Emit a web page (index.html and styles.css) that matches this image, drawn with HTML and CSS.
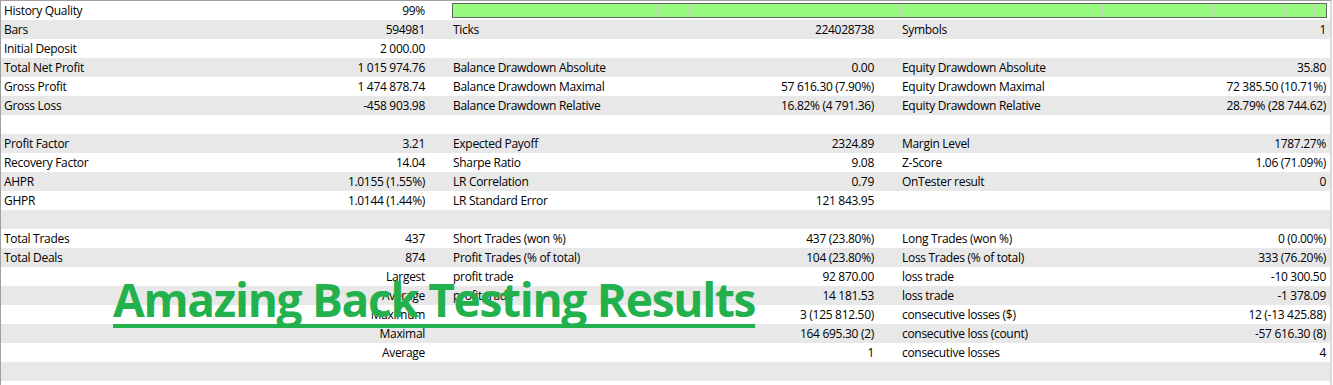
FILE: index.html
```html
<!DOCTYPE html>
<html>
<head>
<meta charset="utf-8">
<link rel="stylesheet" href="styles.css">
</head>
<body>
<div class="report">
  <div class="row">
    <div class="cell"><span>History Quality</span><span>99%</span></div>
    <div class="quality">
      <div class="seg" style="width:4px"></div>
      <div class="seg" style="width:121px"></div>
      <div class="seg" style="width:78px"></div>
      <div class="seg" style="width:31px"></div>
      <div class="seg" style="width:98px"></div>
      <div class="seg" style="width:110px"></div>
      <div class="seg" style="width:100px"></div>
      <div class="seg" style="width:100px"></div>
      <div class="seg" style="width:76px"></div>
      <div class="seg" style="width:32px"></div>
      <div class="seg" style="width:71px"></div>
      <div class="seg" style="width:29px"></div>
      <div class="seg last"></div>
    </div>
  </div>
  <div class="row">
    <div class="cell"><span>Bars</span><span>594981</span></div>
    <div class="cell"><span>Ticks</span><span>224028738</span></div>
    <div class="cell"><span>Symbols</span><span>1</span></div>
  </div>
  <div class="row">
    <div class="cell"><span>Initial Deposit</span><span>2 000.00</span></div>
    <div class="cell"></div>
    <div class="cell"></div>
  </div>
  <div class="row">
    <div class="cell"><span>Total Net Profit</span><span>1 015 974.76</span></div>
    <div class="cell"><span>Balance Drawdown Absolute</span><span>0.00</span></div>
    <div class="cell"><span>Equity Drawdown Absolute</span><span>35.80</span></div>
  </div>
  <div class="row">
    <div class="cell"><span>Gross Profit</span><span>1 474 878.74</span></div>
    <div class="cell"><span>Balance Drawdown Maximal</span><span>57 616.30 (7.90%)</span></div>
    <div class="cell"><span>Equity Drawdown Maximal</span><span>72 385.50 (10.71%)</span></div>
  </div>
  <div class="row">
    <div class="cell"><span>Gross Loss</span><span>-458 903.98</span></div>
    <div class="cell"><span>Balance Drawdown Relative</span><span>16.82% (4 791.36)</span></div>
    <div class="cell"><span>Equity Drawdown Relative</span><span>28.79% (28 744.62)</span></div>
  </div>
  <div class="row"></div>
  <div class="row">
    <div class="cell"><span>Profit Factor</span><span>3.21</span></div>
    <div class="cell"><span>Expected Payoff</span><span>2324.89</span></div>
    <div class="cell"><span>Margin Level</span><span>1787.27%</span></div>
  </div>
  <div class="row">
    <div class="cell"><span>Recovery Factor</span><span>14.04</span></div>
    <div class="cell"><span>Sharpe Ratio</span><span>9.08</span></div>
    <div class="cell"><span>Z-Score</span><span>1.06 (71.09%)</span></div>
  </div>
  <div class="row">
    <div class="cell"><span>AHPR</span><span>1.0155 (1.55%)</span></div>
    <div class="cell"><span>LR Correlation</span><span>0.79</span></div>
    <div class="cell"><span>OnTester result</span><span>0</span></div>
  </div>
  <div class="row">
    <div class="cell"><span>GHPR</span><span>1.0144 (1.44%)</span></div>
    <div class="cell"><span>LR Standard Error</span><span>121 843.95</span></div>
    <div class="cell"></div>
  </div>
  <div class="row"></div>
  <div class="row">
    <div class="cell"><span>Total Trades</span><span>437</span></div>
    <div class="cell"><span>Short Trades (won %)</span><span>437 (23.80%)</span></div>
    <div class="cell"><span>Long Trades (won %)</span><span>0 (0.00%)</span></div>
  </div>
  <div class="row">
    <div class="cell"><span>Total Deals</span><span>874</span></div>
    <div class="cell"><span>Profit Trades (% of total)</span><span>104 (23.80%)</span></div>
    <div class="cell"><span>Loss Trades (% of total)</span><span>333 (76.20%)</span></div>
  </div>
  <div class="row">
    <div class="cell"><span></span><span>Largest</span></div>
    <div class="cell"><span>profit trade</span><span>92 870.00</span></div>
    <div class="cell"><span>loss trade</span><span>-10 300.50</span></div>
  </div>
  <div class="row">
    <div class="cell"><span></span><span>Average</span></div>
    <div class="cell"><span>profit trade</span><span>14 181.53</span></div>
    <div class="cell"><span>loss trade</span><span>-1 378.09</span></div>
  </div>
  <div class="row">
    <div class="cell"><span></span><span>Maximum</span></div>
    <div class="cell"><span></span><span>3 (125 812.50)</span></div>
    <div class="cell"><span>consecutive losses ($)</span><span>12 (-13 425.88)</span></div>
  </div>
  <div class="row">
    <div class="cell"><span></span><span>Maximal</span></div>
    <div class="cell"><span></span><span>164 695.30 (2)</span></div>
    <div class="cell"><span>consecutive loss (count)</span><span>-57 616.30 (8)</span></div>
  </div>
  <div class="row">
    <div class="cell"><span></span><span>Average</span></div>
    <div class="cell"><span></span><span>1</span></div>
    <div class="cell"><span>consecutive losses</span><span>4</span></div>
  </div>
  <div class="row"></div>
  <div class="row"></div>
  <h1 class="title">Amazing Back Testing Results</h1>
</div>
</body>
</html>
```
FILE: styles.css
```css
html, body {
  margin: 0;
  padding: 0;
  background: #ffffff;
}

.report {
  position: relative;
  width: 1329px;
  height: 384px;
  overflow: hidden;
  border-top: 1px solid #a0a0a0;
  border-left: 1px solid #a0a0a0;
  border-right: 2px solid #dadada;
  font-family: "Open Sans", "Noto Sans", sans-serif;
  font-size: 12px;
  letter-spacing: -0.3px;
  color: #000000;
}

.row {
  display: grid;
  grid-template-columns: 449px 449px 431px;
  height: 19px;
  line-height: 19px;
}

.row:nth-child(even) {
  background: #e8e8e8;
}

.cell {
  display: flex;
  justify-content: space-between;
  padding: 0 25px 0 3px;
  white-space: nowrap;
}

.cell:nth-child(3) {
  padding-right: 4px;
}

.quality {
  grid-column: 2 / 4;
  display: flex;
  margin: 2px 3px 2px 2px;
  border: 1px solid #646464;
  background: #98fb80;
}

.seg {
  height: 13px;
  border-right: 1px solid #c4dcbc;
  flex: none;
}

.seg.last {
  flex: 1;
  border-right: none;
}

.title {
  position: absolute;
  left: 112px;
  top: 269px;
  margin: 0;
  font-family: "Open Sans", sans-serif;
  font-weight: 700;
  font-size: 46px;
  line-height: 58px;
  color: #22b14c;
  text-decoration: underline;
  text-decoration-thickness: 4px;
  text-underline-offset: 7px;
  text-decoration-skip-ink: none;
  letter-spacing: -1.3px;
  white-space: nowrap;
}
```
